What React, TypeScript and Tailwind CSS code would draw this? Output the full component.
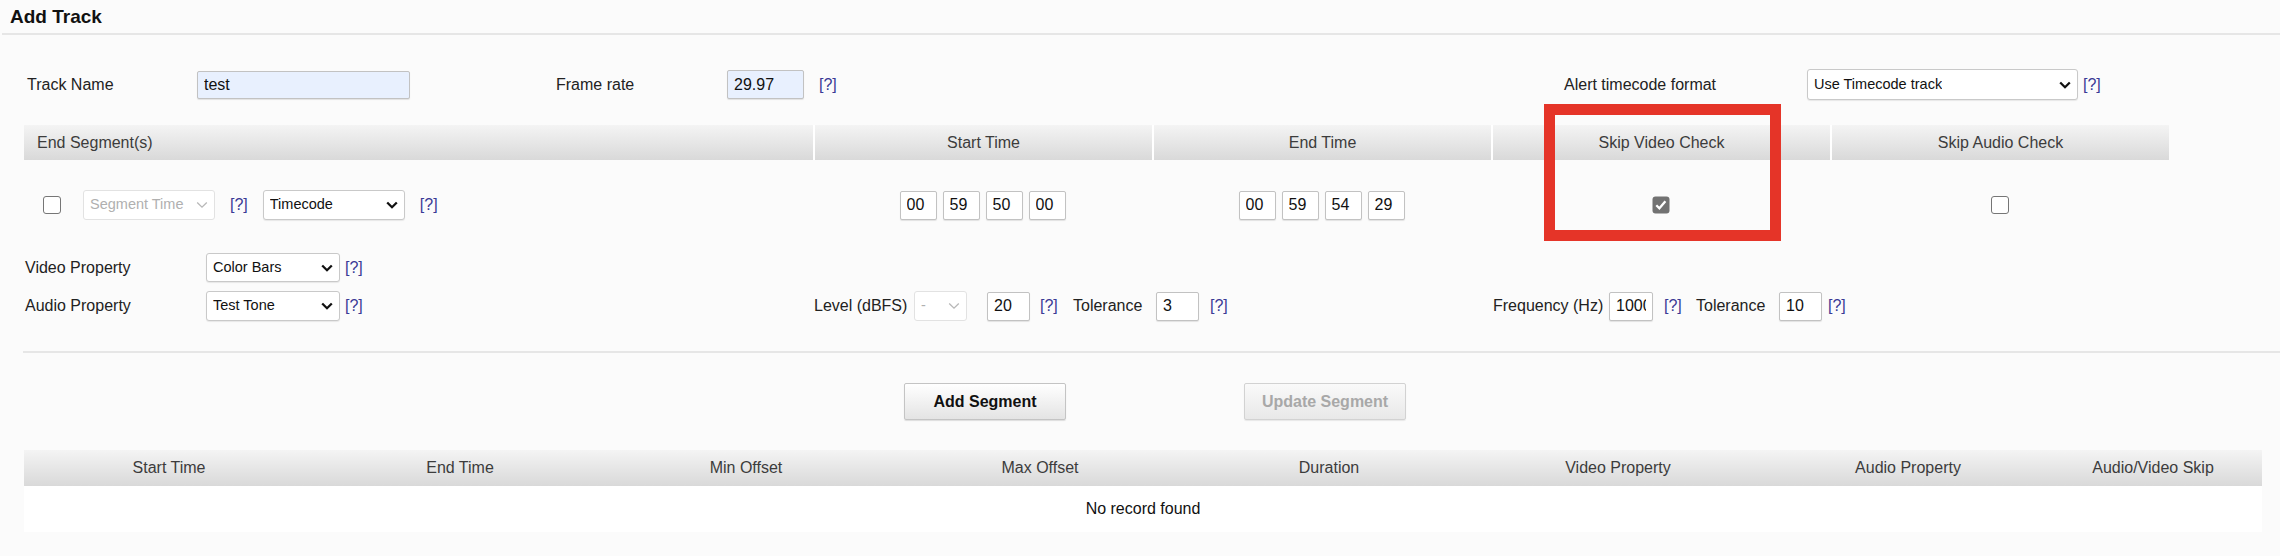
import clsx from "clsx";

const FONT = "font-['Liberation_Sans',Arial,sans-serif]";

function Help({ className }: { className?: string }) {
  return <span className={clsx("text-[16px] text-[#3a3a96]", className)}>[?]</span>;
}

function Chevron({ disabled }: { disabled?: boolean }) {
  return (
    <svg width="12" height="8" viewBox="0 0 12 8" className="shrink-0">
      <path
        d="M1.2 1.5 L6 6.2 L10.8 1.5"
        fill="none"
        stroke={disabled ? "#b8b8b8" : "#111"}
        strokeWidth={disabled ? 1.3 : 2.3}
      />
    </svg>
  );
}

function FakeSelect({
  label,
  className,
  disabled = false,
}: {
  label: string;
  className: string;
  disabled?: boolean;
}) {
  return (
    <div
      className={clsx(
        "flex items-center justify-between rounded-[3px] border bg-white pl-[6px] pr-[6px] text-[14.5px]",
        disabled
          ? "border-[#e2e2e2] text-[#b0b0b0]"
          : "border-[#c9c9c9] text-[#111] shadow-[0_1px_1px_rgba(0,0,0,0.08)]",
        className,
      )}
    >
      <span className="truncate">{label}</span>
      <Chevron disabled={disabled} />
    </div>
  );
}

function Field({
  value,
  className,
  filled = false,
}: {
  value: string;
  className: string;
  filled?: boolean;
}) {
  return (
    <input
      readOnly
      value={value}
      className={clsx(
        "rounded-[2px] border border-[#c2c2c2] px-[6px] text-[16px] text-[#111] shadow-[0_1px_1px_rgba(0,0,0,0.1)] outline-none",
        filled ? "bg-[#e8f0fe]" : "bg-white",
        className,
      )}
    />
  );
}

function Check({ checked = false }: { checked?: boolean }) {
  if (checked) {
    return (
      <svg width="18" height="18" viewBox="0 0 18 18">
        <rect x="0.5" y="0.5" width="17" height="17" rx="3" fill="#727272" />
        <path d="M4.3 9.2 L7.4 12.3 L13.4 5.3" fill="none" stroke="#fff" strokeWidth="2.3" />
      </svg>
    );
  }
  return <div className="h-[18px] w-[18px] rounded-[3px] border-[1.5px] border-[#767676] bg-white" />;
}

function TimeBoxes({ values }: { values: string[] }) {
  return (
    <div className="flex justify-center gap-[6px]">
      {values.map((v, i) => (
        <Field key={i} value={v} className="h-[29px] w-[37px]" />
      ))}
    </div>
  );
}

const segmentCols = ["Start Time", "End Time", "Skip Video Check", "Skip Audio Check"];

const listCols = [
  "Start Time",
  "End Time",
  "Min Offset",
  "Max Offset",
  "Duration",
  "Video Property",
  "Audio Property",
  "Audio/Video Skip",
];

export default function App() {
  return (
    <div className={clsx("relative h-[556px] w-[2280px] overflow-hidden bg-[#fbfbfb] text-[16px] text-[#222]", FONT)}>
      {/* title */}
      <div className="ml-[2px] flex h-[35px] items-center border-b-2 border-[#e6e6e6] pl-[8px] pt-[1px]">
        <h1 className="text-[19px] font-bold text-[#111]">Add Track</h1>
      </div>

      <div className="pl-[24px]">
        {/* track settings */}
        <div className="mt-[34px] flex h-[31px] items-center">
          <div className="w-[173px] pl-[3px]">Track Name</div>
          <Field value="test" filled className="h-[28px] w-[213px]" />
          <div className="w-[146px]" />
          <div className="w-[171px]">Frame rate</div>
          <Field value="29.97" filled className="h-[29px] w-[77px]" />
          <div className="w-[760px] pl-[15px]">
            <Help />
          </div>
          <div className="w-[243px]">Alert timecode format</div>
          <FakeSelect label="Use Timecode track" className="h-[31px] w-[271px]" />
          <Help className="ml-[5px]" />
        </div>

        {/* segment header */}
        <div className="mt-[25px] grid h-[35px] w-[2145px] grid-cols-[789px_339px_339px_339px_339px] bg-linear-to-b from-[#f4f4f4] to-[#d9d9d9] text-[#3c3c3c]">
          <div className="flex items-center pl-[13px]">End Segment(s)</div>
          {segmentCols.map((c) => (
            <div key={c} className="flex items-center justify-center border-l-2 border-white">
              {c}
            </div>
          ))}
        </div>

        {/* segment row */}
        <div className="mt-[30px] grid h-[30px] w-[2145px] grid-cols-[789px_339px_339px_339px_339px] items-center">
          <div className="flex items-center">
            <div className="ml-[19px]">
              <Check />
            </div>
            <FakeSelect label="Segment Time" disabled className="ml-[22px] h-[30px] w-[132px]" />
            <Help className="ml-[15px]" />
            <FakeSelect label="Timecode" className="ml-[15px] h-[30px] w-[142px]" />
            <Help className="ml-[15px]" />
          </div>
          <TimeBoxes values={["00", "59", "50", "00"]} />
          <TimeBoxes values={["00", "59", "54", "29"]} />
          <div className="flex justify-center">
            <Check checked />
          </div>
          <div className="flex justify-center">
            <Check />
          </div>
        </div>

        {/* properties */}
        <div className="mt-[33px] flex h-[29px] items-center">
          <div className="w-[182px] pl-[1px]">Video Property</div>
          <FakeSelect label="Color Bars" className="h-[29px] w-[134px]" />
          <Help className="ml-[5px]" />
        </div>
        <div className="mt-[9px] flex h-[30px] items-center">
          <div className="flex w-[790px] items-center">
            <div className="w-[182px] pl-[1px]">Audio Property</div>
            <FakeSelect label="Test Tone" className="h-[30px] w-[134px]" />
            <Help className="ml-[5px]" />
          </div>
          <div className="flex w-[679px] items-center">
            <div className="w-[100px]">Level (dBFS)</div>
            <FakeSelect label="-" disabled className="h-[30px] w-[53px]" />
            <Field value="20" className="ml-[20px] h-[29px] w-[43px]" />
            <div className="w-[43px] pl-[10px]">
              <Help />
            </div>
            <div className="w-[83px]">Tolerance</div>
            <Field value="3" className="h-[29px] w-[43px]" />
            <Help className="ml-[11px]" />
          </div>
          <div className="flex items-center">
            <div className="w-[116px]">Frequency (Hz)</div>
            <Field value="1000" className="h-[29px] w-[44px]" />
            <div className="w-[43px] pl-[11px]">
              <Help />
            </div>
            <div className="w-[83px]">Tolerance</div>
            <Field value="10" className="h-[29px] w-[43px]" />
            <Help className="ml-[6px]" />
          </div>
        </div>
      </div>

      <div className="ml-[23px] mt-[30px] border-t-2 border-[#e6e6e6]" />

      {/* actions */}
      <div className="ml-[904px] mt-[30px] flex gap-[178px]">
        <button className="h-[37px] w-[162px] rounded-[2px] border border-[#c4c4c4] bg-linear-to-b from-white to-[#e4e4e4] text-[16px] font-bold text-[#111] shadow-[0_1px_1px_rgba(0,0,0,0.12)]">
          Add Segment
        </button>
        <button
          disabled
          className="h-[37px] w-[162px] rounded-[2px] border border-[#d2d2d2] bg-linear-to-b from-[#fafafa] to-[#e8e8e8] text-[16px] font-bold text-[#a8a8a8] shadow-[0_1px_1px_rgba(0,0,0,0.08)]"
        >
          Update Segment
        </button>
      </div>

      {/* segment list */}
      <div className="ml-[24px] mt-[30px] w-[2238px]">
        <div className="grid h-[36px] grid-cols-[290px_292px_280px_308px_270px_308px_272px_218px] bg-linear-to-b from-[#f4f4f4] to-[#d9d9d9] text-[#3c3c3c]">
          {listCols.map((c) => (
            <div key={c} className="flex items-center justify-center">
              {c}
            </div>
          ))}
        </div>
        <div className="flex h-[46px] items-center justify-center bg-white text-[#111]">No record found</div>
      </div>

      {/* highlight annotation */}
      <div className="absolute left-[1544px] top-[104px] h-[137px] w-[237px] border-[11px] border-[#e53428]" />
    </div>
  );
}
